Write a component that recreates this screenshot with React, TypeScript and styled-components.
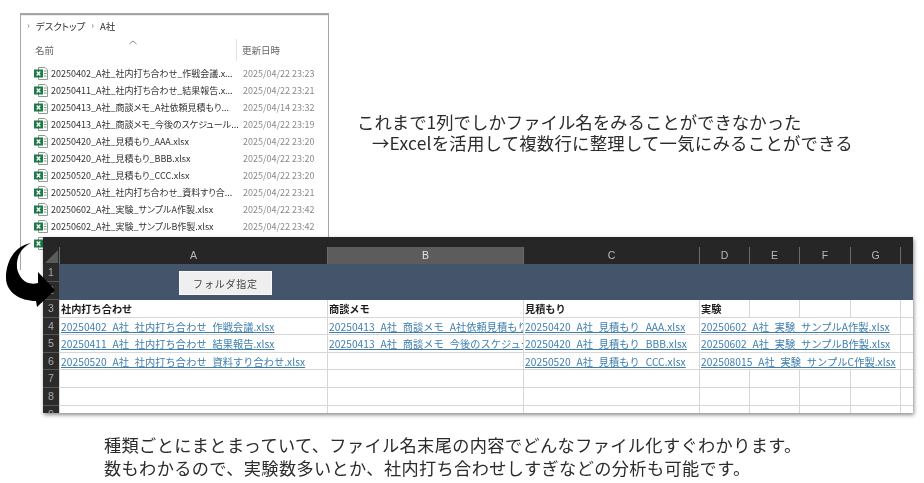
import styled, { createGlobalStyle } from 'styled-components'

const GlobalStyle = createGlobalStyle`
  html, body {
    margin: 0;
    padding: 0;
    background: #fff;
  }
  body {
    font-family: 'Noto Sans CJK JP', 'Noto Sans', sans-serif;
    color: #2b2b2b;
  }
`

const Slide = styled.div`
  position: relative;
  width: 924px;
  height: 483px;
  overflow: hidden;
  filter: blur(0.3px);
`
const TopArea = styled.div`
  display: flex;
  height: 237px;
  padding: 13px 0 0 20px;
  box-sizing: border-box;
`
const Explorer = styled.div`
  flex: none;
  width: 309px;
  height: 257px;
  box-sizing: border-box;
  border: 1px solid #a6a6a6;
  border-top-width: 2px;
  border-bottom: none;
  overflow: hidden;
`
const PathBar = styled.div`
  display: flex;
  align-items: center;
  gap: 6px;
  height: 19px;
  padding-left: 6px;
  border-top: 1px solid #ececec;
  font-size: 9.5px;
  font-feature-settings: 'palt';
  color: #333;
`
const Chevron = styled.span`
  font-size: 9px;
  color: #777;
  line-height: 1;
`
const ColumnTitles = styled.div`
  position: relative;
  display: flex;
  height: 22px;
  margin-top: 4px;
  font-size: 9.5px;
  line-height: 22px;
  color: #666;
`
const SortCaret = styled.svg`
  position: absolute;
  left: 108px;
  top: 1px;
`
const NameTitle = styled.div`
  width: 216px;
  padding-left: 14px;
  box-sizing: border-box;
  border-right: 1px solid #e2e2e2;
`
const DateTitle = styled.div`
  padding-left: 5px;
`
const FileList = styled.div`
  margin-top: 4px;
`
const FileRow = styled.div`
  display: flex;
  align-items: center;
  height: 17px;
  padding-left: 13px;
  font-size: 9px;
  font-feature-settings: 'palt';
  white-space: nowrap;
`
const FileName = styled.span`
  width: 192px;
  margin-left: 3px;
  color: #333;
`
const FileDate = styled.span`
  color: #8a8a8a;
`
const Callout = styled.div`
  margin: 98px 0 0 28px;
  font-size: 17.4px;
  line-height: 21px;
  white-space: nowrap;
`
const CalloutIndent = styled.div`
  padding-left: 15px;
  letter-spacing: 0.22px;
`
const Sheet = styled.div`
  position: relative;
  width: 870px;
  height: 176px;
  margin-left: 43px;
  overflow: hidden;
  background: #fff;
  box-shadow: 1px 2px 4px rgba(0, 0, 0, 0.45);
`
const TopBand = styled.div`
  height: 10px;
  background: #262626;
`
const gridColumns = '16px 268px 196px 176px 50px 50px 51px 50px 13px'
const HeaderRow = styled.div`
  display: grid;
  grid-template-columns: ${gridColumns};
  height: 17px;
  background: #262626;
`
const Corner = styled.div`
  display: flex;
  align-items: flex-end;
  justify-content: flex-end;
  padding: 0 1px 2px 0;
  box-sizing: border-box;
`
const ColHead = styled.div<{ $selected?: boolean }>`
  box-sizing: border-box;
  text-align: center;
  font-family: 'Liberation Sans', sans-serif;
  font-size: 10.5px;
  line-height: 17px;
  color: ${(p) => (p.$selected ? '#e4e4e4' : '#b9b9b9')};
  background: ${(p) => (p.$selected ? '#5c5c5c' : 'transparent')};
  border-left: 1px solid #6a6a6a;
  border-bottom: 1px solid ${(p) => (p.$selected ? '#1f7a4a' : '#8a8a8a')};
`
const BannerRow = styled.div`
  display: flex;
  height: 36px;
`
const BannerNums = styled.div`
  width: 16px;
  flex: none;
`
const RowNum = styled.div<{ $h: string }>`
  width: 16px;
  height: ${(p) => p.$h};
  box-sizing: border-box;
  flex: none;
  background: #2b2b2b;
  color: #a8a8a8;
  border-bottom: 1px solid #555;
  font-family: 'Liberation Sans', sans-serif;
  font-size: 10.5px;
  line-height: 17px;
  text-align: center;
`
const Banner = styled.div`
  flex: 1;
  display: flex;
  align-items: center;
  padding: 2px 0 0 120px;
  background: #44546a;
`
const FolderButton = styled.button`
  width: 93px;
  height: 24px;
  padding: 0;
  border: 1px solid #fafafa;
  background: #efefef;
  color: #444;
  font-family: inherit;
  font-size: 10px;
  letter-spacing: 0.8px;
`
const DataRow = styled.div`
  display: grid;
  grid-template-columns: ${gridColumns};
  height: 17.6px;
`
const Cell = styled.div<{ $span?: number; $bold?: boolean }>`
  grid-column: span ${(p) => p.$span ?? 1};
  box-sizing: border-box;
  min-width: 0;
  overflow: hidden;
  padding-left: 1px;
  border-left: 1px solid #d6d6d6;
  border-bottom: 1px solid #d6d6d6;
  font-size: 10.2px;
  font-weight: ${(p) => (p.$bold ? 700 : 400)};
  line-height: 17px;
  color: #1c1c1c;
  white-space: nowrap;
`
const FileLink = styled.a`
  color: #3f7fae;
  text-decoration: underline;
  letter-spacing: 0.07px;
`
const Notes = styled.div`
  margin: 20px 0 0 104px;
  font-size: 17.2px;
  line-height: 23px;
  letter-spacing: 0.37px;
  white-space: nowrap;
`
const CurvedArrow = styled.svg`
  position: absolute;
  left: 0;
  top: 235px;
`

const files: [string, string][] = [
  ['20250402_A社_社内打ち合わせ_作戦会議.x...', '2025/04/22 23:23'],
  ['20250411_A社_社内打ち合わせ_結果報告.x...', '2025/04/22 23:21'],
  ['20250413_A社_商談メモ_A社依頼見積もり...', '2025/04/14 23:32'],
  ['20250413_A社_商談メモ_今後のスケジュール...', '2025/04/22 23:19'],
  ['20250420_A社_見積もり_AAA.xlsx', '2025/04/22 23:20'],
  ['20250420_A社_見積もり_BBB.xlsx', '2025/04/22 23:20'],
  ['20250520_A社_見積もり_CCC.xlsx', '2025/04/22 23:20'],
  ['20250520_A社_社内打ち合わせ_資料すり合...', '2025/04/22 23:21'],
  ['20250602_A社_実験_サンプルA作製.xlsx', '2025/04/22 23:42'],
  ['20250602_A社_実験_サンプルB作製.xlsx', '2025/04/22 23:42'],
]

const columns = ['A', 'B', 'C', 'D', 'E', 'F', 'G', '']

const links = [
  [
    '20250402_A社_社内打ち合わせ_作戦会議.xlsx',
    '20250413_A社_商談メモ_A社依頼見積もり.xlsx',
    '20250420_A社_見積もり_AAA.xlsx',
    '20250602_A社_実験_サンプルA作製.xlsx',
  ],
  [
    '20250411_A社_社内打ち合わせ_結果報告.xlsx',
    '20250413_A社_商談メモ_今後のスケジュール.xlsx',
    '20250420_A社_見積もり_BBB.xlsx',
    '20250602_A社_実験_サンプルB作製.xlsx',
  ],
  [
    '20250520_A社_社内打ち合わせ_資料すり合わせ.xlsx',
    '',
    '20250520_A社_見積もり_CCC.xlsx',
    '202508015_A社_実験_サンプルC作製.xlsx',
  ],
]

function ExcelIcon() {
  return (
    <svg width="14" height="13" viewBox="0 0 14 13">
      <path d="M4.5 .5H11L13.5 3V12.5H4.5Z" fill="#fff" stroke="#8f9a93" />
      <path d="M10 4H12.5M10 6.5H12.5M10 9H12.5" stroke="#6d9c80" />
      <rect x="0" y="2.5" width="9" height="8" fill="#1e7b48" />
      <path d="M2.7 4.5L6.3 8.5M6.3 4.5L2.7 8.5" stroke="#fff" strokeWidth="1.2" />
    </svg>
  )
}

export default function App() {
  return (
    <Slide>
      <GlobalStyle />
      <TopArea>
        <Explorer>
          <PathBar>
            <Chevron>›</Chevron>
            デスクトップ
            <Chevron>›</Chevron>
            A社
          </PathBar>
          <ColumnTitles>
            <SortCaret width="8" height="5" viewBox="0 0 8 5">
              <path d="M.5 4L4 1L7.5 4" fill="none" stroke="#888" />
            </SortCaret>
            <NameTitle>名前</NameTitle>
            <DateTitle>更新日時</DateTitle>
          </ColumnTitles>
          <FileList>
            {files.map(([name, date]) => (
              <FileRow key={name}>
                <ExcelIcon />
                <FileName>{name}</FileName>
                <FileDate>{date}</FileDate>
              </FileRow>
            ))}
            {/* the next file is hidden under the sheet, only its icon shows */}
            <FileRow>
              <ExcelIcon />
            </FileRow>
          </FileList>
        </Explorer>
        <Callout>
          これまで1列でしかファイル名をみることができなかった
          <CalloutIndent>→Excelを活用して複数行に整理して一気にみることができる</CalloutIndent>
        </Callout>
      </TopArea>

      <Sheet>
        <TopBand />
        <HeaderRow>
          <Corner>
            <svg width="13" height="13" viewBox="0 0 13 13">
              <path d="M13 0V13H0Z" fill="#5b5b5b" />
            </svg>
          </Corner>
          {columns.map((c, i) => (
            <ColHead key={i} $selected={c === 'B'}>
              {c}
            </ColHead>
          ))}
        </HeaderRow>
        <BannerRow>
          <BannerNums>
            <RowNum $h="18px">1</RowNum>
            <RowNum $h="18px">2</RowNum>
          </BannerNums>
          <Banner>
            <FolderButton>フォルダ指定</FolderButton>
          </Banner>
        </BannerRow>
        <DataRow>
          <RowNum $h="17.6px">3</RowNum>
          <Cell $bold>社内打ち合わせ</Cell>
          <Cell $bold>商談メモ</Cell>
          <Cell $bold>見積もり</Cell>
          <Cell $bold>実験</Cell>
          <Cell />
          <Cell />
          <Cell />
          <Cell />
        </DataRow>
        {links.map((row, r) => (
          <DataRow key={r}>
            <RowNum $h="17.6px">{r + 4}</RowNum>
            <Cell>{row[0] && <FileLink>{row[0]}</FileLink>}</Cell>
            <Cell>{row[1] && <FileLink>{row[1]}</FileLink>}</Cell>
            <Cell>{row[2] && <FileLink>{row[2]}</FileLink>}</Cell>
            <Cell $span={4}>{row[3] && <FileLink>{row[3]}</FileLink>}</Cell>
            <Cell />
          </DataRow>
        ))}
        {[7, 8, 9].map((n) => (
          <DataRow key={n}>
            <RowNum $h="17.6px">{n}</RowNum>
            {columns.map((_, i) => (
              <Cell key={i} />
            ))}
          </DataRow>
        ))}
      </Sheet>

      <Notes>
        種類ごとにまとまっていて、ファイル名末尾の内容でどんなファイル化すぐわかります。
        <br />
        数もわかるので、実験数多いとか、社内打ち合わせしすぎなどの分析も可能です。
      </Notes>

      <CurvedArrow width="60" height="76" viewBox="0 235 60 76">
        <path
          d="M31 243C14 246 6 262 6 278C6 292 20 301 36 301L37 307L55 290L38 272L38 283C26 286 19 278 17 268C16 256 22 247 31 243Z"
          fill="#000"
        />
      </CurvedArrow>
    </Slide>
  )
}
